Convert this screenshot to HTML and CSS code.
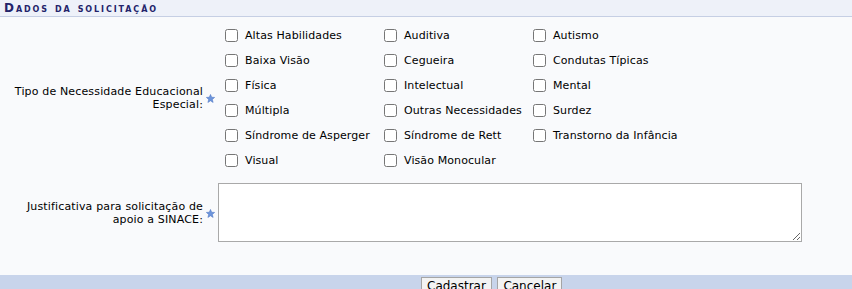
FILE: index.html
```html
<!DOCTYPE html>
<html lang="pt-BR">
<head>
    <meta charset="UTF-8">
    <title>Dados da solicitação</title>
    <link rel="stylesheet" href="styles.css">
</head>
<body>
    <div class="formulario">
        <div class="caption">Dados da solicitação</div>

        <div class="linha">
            <div class="rotulo">Tipo de Necessidade Educacional Especial:</div>
            <div class="obrigatorio">
                <svg width="9" height="9" viewBox="0 0 10 10"><polygon points="5,0.5 6.3,3.6 9.6,3.8 7,6 7.9,9.4 5,7.5 2.1,9.4 3,6 0.4,3.8 3.7,3.6" fill="#6d95dc" stroke="#4a74c4" stroke-width="0.6"/></svg>
            </div>
            <div class="opcoes">
                <label><input type="checkbox"> Altas Habilidades</label>
                <label><input type="checkbox"> Auditiva</label>
                <label><input type="checkbox"> Autismo</label>
                <label><input type="checkbox"> Baixa Visão</label>
                <label><input type="checkbox"> Cegueira</label>
                <label><input type="checkbox"> Condutas Típicas</label>
                <label><input type="checkbox"> Física</label>
                <label><input type="checkbox"> Intelectual</label>
                <label><input type="checkbox"> Mental</label>
                <label><input type="checkbox"> Múltipla</label>
                <label><input type="checkbox"> Outras Necessidades</label>
                <label><input type="checkbox"> Surdez</label>
                <label><input type="checkbox"> Síndrome de Asperger</label>
                <label><input type="checkbox"> Síndrome de Rett</label>
                <label><input type="checkbox"> Transtorno da Infância</label>
                <label><input type="checkbox"> Visual</label>
                <label><input type="checkbox"> Visão Monocular</label>
            </div>
        </div>

        <div class="linha linha-texto">
            <div class="rotulo">Justificativa para solicitação de apoio a SINACE:</div>
            <div class="obrigatorio">
                <svg width="9" height="9" viewBox="0 0 10 10"><polygon points="5,0.5 6.3,3.6 9.6,3.8 7,6 7.9,9.4 5,7.5 2.1,9.4 3,6 0.4,3.8 3.7,3.6" fill="#6d95dc" stroke="#4a74c4" stroke-width="0.6"/></svg>
            </div>
            <div class="campo">
                <textarea></textarea>
            </div>
        </div>

        <div class="rodape">
            <button>Cadastrar</button>
            <button>Cancelar</button>
        </div>
    </div>
</body>
</html>
```

FILE: styles.css
```css
body {
    margin: 0;
    padding: 0;
    background-color: #f9fafc;
    font-family: 'DejaVu Sans', Verdana, sans-serif;
    font-size: 11px;
    color: #000;
}

.caption {
    height: 16px;
    line-height: 16px;
    padding-left: 4px;
    background-color: #eef1f9;
    border-bottom: 1px solid #c6cfe4;
    color: #23236a;
    font-weight: bold;
    font-variant: small-caps;
    text-transform: lowercase;
    font-size: 12px;
    letter-spacing: 1.9px;
}

.caption::first-letter {
    text-transform: uppercase;
}

.linha {
    display: flex;
    align-items: center;
    margin-top: 6px;
}

.linha-texto {
    margin-top: 10px;
}

.rotulo {
    width: 203px;
    text-align: right;
    line-height: 13px;
    letter-spacing: 0.15px;
}

.obrigatorio {
    width: 15px;
    display: flex;
    justify-content: center;
    padding-top: 1px;
}

.opcoes {
    display: grid;
    grid-template-columns: 159px 149px auto;
    padding-left: 7px;
}

.opcoes label {
    display: flex;
    align-items: center;
    height: 25px;
    letter-spacing: 0.1px;
}

.opcoes input {
    width: 13px;
    height: 13px;
    margin: 0 7px 0 0;
}

.campo textarea {
    display: block;
    width: 584px;
    height: 59px;
    box-sizing: border-box;
    border: 1px solid #a9a9a9;
    background: #fff;
    margin: 0;
}

.rodape {
    margin-top: 33px;
    height: 40px;
    background-color: #c8d4eb;
    padding-left: 421px;
    padding-top: 2px;
}

.rodape button {
    font-family: 'DejaVu Sans', Verdana, sans-serif;
    font-size: 12px;
    padding: 1px 5px;
    margin: 0 2px 0 0;
    border: 1px solid #a5a5a5;
    background-color: #f3f3f3;
    color: #000;
}
```
